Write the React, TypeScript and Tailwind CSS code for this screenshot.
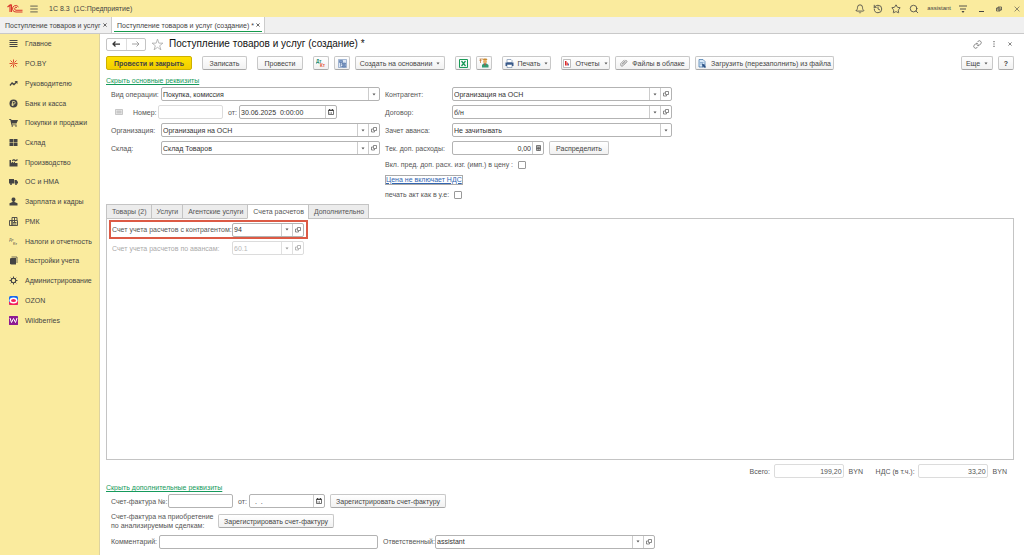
import type { ReactNode } from 'react'
import { Bell, History, Link, Menu, Search, Star } from 'lucide-react'

const icons: Record<string, ReactNode> = {
  main: <path d="M1 2h16v2H1zM1 6h16v2H1zM1 10h16v2H1zM1 14h16v2H1z" />,
  po: (
    <g stroke="#dd4a2c" strokeWidth="2" fill="none">
      <path d="M9 1v5M9 12v5M1 9h5M12 9h5M3 3l4 4M11 11l4 4M15 3l-4 4M3 15l4-4" />
      <circle cx="9" cy="9" r="1.5" />
    </g>
  ),
  chart: <path d="M1 12l5-6 4 3 3-3-2-2h6v6l-2-2-5 5-4-3-3 4z" />,
  bank: (
    <>
      <circle cx="9" cy="9" r="8" />
      <path d="M7 14V5h3a2.500 2.500 0 0 1 0 5H5M5 12h5" stroke="#faeb9e" strokeWidth="1.5" fill="none" />
    </>
  ),
  cart: (
    <>
      <path d="M0 2h4l1 2h13l-3 7H6l.5 2H15v1.500H5L2.500 3.500H0z" />
      <circle cx="6.5" cy="16" r="1.6" />
      <circle cx="14" cy="16" r="1.6" />
    </>
  ),
  stock: <path d="M1 2h7.500v6H1zM9.500 2H17v6H9.500zM1 9h7.500v7H1zM9.500 9H17v7H9.500z" />,
  factory: <path d="M1 17V4h3v6l4-3v3l4-3v3h5v7zM6 4l4-2 3 2 4-2v3l-4 2-3-2-4 1z" />,
  truck: (
    <>
      <path d="M0 4h10v9H0zM11 6h4l3 4v3h-7z" />
      <circle cx="4" cy="14" r="2" />
      <circle cx="14" cy="14" r="2" />
    </>
  ),
  person: <path d="M9 1a4 4 0 0 1 2 7.500v1.500l6 2.500V17H1v-4.500L7 10V8.500A4 4 0 0 1 9 1z" />,
  rmk: (
    <g fill="none" stroke="currentColor" strokeWidth="1.8">
      <path d="M6 6V1h10v5M1 7h5v10H1zM6 7h11v10H6zM8 11h7M8 14h7M11 1v9" />
    </g>
  ),
  tax: (
    <g fontFamily="Liberation Sans, sans-serif" fontSize="8">
      <text x="0" y="8">Дт</text>
      <text x="8" y="16">Кт</text>
    </g>
  ),
  books: (
    <>
      <path d="M2 5l3-1v13l-3-1zM5 4h9v13H5z" />
      <path d="M5 2h11v12" stroke="currentColor" strokeWidth="1.5" fill="none" />
    </>
  ),
  gear: (
    <g fill="none" stroke="currentColor">
      <circle cx="9" cy="9" r="4.5" strokeWidth="2.2" />
      <path d="M9 1v3M9 14v3M1 9h3M14 9h3M3.500 3.500l2 2M12.500 12.500l2 2M14.500 3.500l-2 2M5.500 12.500l-2 2" strokeWidth="2" />
    </g>
  ),
  ozon: (
    <>
      <rect width="18" height="18" rx="3" fill="#1668ee" />
      <path d="M0 12v3a3 3 0 0 0 3 3h12a3 3 0 0 0 3-3V9z" fill="#f3215c" />
      <ellipse cx="9" cy="9" rx="8" ry="6" fill="#fff" />
      <ellipse cx="9" cy="9" rx="5" ry="3" fill="#f3215c" />
    </>
  ),
  wb: (
    <>
      <rect width="18" height="18" rx="1" fill="#8e1a92" />
      <path d="M2 4l3 9 4-8 4 8 3-9" stroke="#fff" strokeWidth="2" fill="none" />
    </>
  ),
}

const sections = [
  { icon: 'main', title: 'Главное' },
  { icon: 'po', title: 'PO.BY' },
  { icon: 'chart', title: 'Руководителю' },
  { icon: 'bank', title: 'Банк и касса' },
  { icon: 'cart', title: 'Покупки и продажи' },
  { icon: 'stock', title: 'Склад' },
  { icon: 'factory', title: 'Производство' },
  { icon: 'truck', title: 'ОС и НМА' },
  { icon: 'person', title: 'Зарплата и кадры' },
  { icon: 'rmk', title: 'РМК' },
  { icon: 'tax', title: 'Налоги и отчетность' },
  { icon: 'books', title: 'Настройки учета' },
  { icon: 'gear', title: 'Администрирование' },
  { icon: 'ozon', title: 'OZON' },
  { icon: 'wb', title: 'Wildberries' },
]

const documentTabs = ['Товары (2)', 'Услуги', 'Агентские услуги', 'Счета расчетов', 'Дополнительно']

function Caret() {
  return (
    <svg viewBox="0 0 8 6" className="w-1 h-[3px] shrink-0" fill="#555" aria-hidden>
      <path d="M1 1h6L4 5z" />
    </svg>
  )
}

function Cross({ className = '' }: { className?: string }) {
  return (
    <svg viewBox="0 0 10 10" className={className} fill="none" stroke="currentColor" aria-hidden>
      <path d="M1 1l8 8M9 1L1 9" />
    </svg>
  )
}

function OpenIcon() {
  return (
    <svg viewBox="0 0 12 12" className="w-1.5 h-1.5" fill="none" stroke="#666" strokeWidth="1.5" aria-hidden>
      <path d="M5 1h6v6H5zM4 4H1v6h6V8" />
    </svg>
  )
}

function CalendarIcon() {
  return (
    <svg viewBox="0 0 12 12" className="w-1.5 h-1.5" fill="none" stroke="#444" aria-hidden>
      <path d="M1 2h10v9H1z" strokeWidth="1.5" />
      <path d="M1 3h10M3 0v3M9 0v3" strokeWidth="2" />
      <path d="M3 7h6M3 9h6" strokeDasharray="2 1" />
    </svg>
  )
}

function Btn({ children, className = '', label }: { children: ReactNode; className?: string; label?: string }) {
  return (
    <button
      aria-label={label}
      className={`h-[14px] shrink-0 flex items-center justify-center gap-1 rounded-[2px] border border-[#c8c8c8] border-b-[#a8a8a8] bg-linear-to-b from-white to-[#f1f1f1] text-[#444] whitespace-nowrap ${className}`}
    >
      {children}
    </button>
  )
}

type ComboProps = {
  id: string
  value: string
  className?: string
  open?: boolean
  disabled?: boolean
}

function Combo({ id, value, className = '', open = true, disabled = false }: ComboProps) {
  return (
    <div
      className={`h-[14px] flex rounded-[2px] border bg-white ${disabled ? 'border-[#dcdcdc] text-[#888] *:opacity-60' : 'border-[#b3b3b3] text-[#333]'} ${className}`}
    >
      <div className="grid flex-1 min-w-0">
        <select id={id} disabled={disabled} className="col-start-1 row-start-1 appearance-none w-full min-w-0 pl-px outline-none">
          <option>{value}</option>
        </select>
        <span className="col-start-1 row-start-1 justify-self-end w-[11px] border-l border-[#ccc] flex items-center justify-center pointer-events-none">
          <Caret />
        </span>
      </div>
      {open && (
        <button aria-label="Открыть" disabled={disabled} className="w-[11px] border-l border-[#ccc] flex items-center justify-center">
          <OpenIcon />
        </button>
      )}
    </div>
  )
}

function DateInput({ id, value, className = '' }: { id: string; value: string; className?: string }) {
  return (
    <div className={`h-[14px] flex rounded-[2px] border border-[#b3b3b3] bg-white text-[#333] ${className}`}>
      <input id={id} defaultValue={value} className="flex-1 min-w-0 pl-px outline-none" />
      <button aria-label="Выбрать дату" className="w-[11px] border-l border-[#ccc] flex items-center justify-center">
        <CalendarIcon />
      </button>
    </div>
  )
}

function TitleBar() {
  return (
    <header className="h-[17px] shrink-0 flex items-center bg-[#faeb9e] pl-[7px] pr-1 text-[#444]">
      <svg viewBox="0 0 32 18" className="w-4 h-[9px]" fill="none" stroke="#d9352b" aria-hidden>
        <path d="M1 6l5-4v14M9 16V2L6 3" strokeWidth="2.2" />
        <path d="M23 6a6.500 6.500 0 1 0-5 10h13M20 7a3 3 0 1 0-2 5.500h13" strokeWidth="2" />
      </svg>
      <button aria-label="Меню" className="ml-1.5">
        <Menu className="w-[10px] h-[10px]" strokeWidth={2} />
      </button>
      <span className="ml-[10px] whitespace-pre">1С 8.3  (1С:Предприятие)</span>
      <div className="ml-auto flex items-center gap-2">
        <button aria-label="Уведомления"><Bell className="w-[10px] h-[10px]" /></button>
        <button aria-label="История"><History className="w-[10px] h-[10px]" /></button>
        <button aria-label="Избранное"><Star className="w-[10px] h-[10px]" /></button>
        <button aria-label="Поиск"><Search className="w-[10px] h-[10px]" /></button>
        <span className="text-[6px]">assistant</span>
        <button aria-label="Настройки">
          <svg viewBox="0 0 16 16" className="w-2 h-2" stroke="currentColor" strokeWidth="1.8" fill="none" aria-hidden>
            <path d="M0 2h16M2 8h12" />
            <path d="M5 12h6l-3 4z" fill="currentColor" stroke="none" />
          </svg>
        </button>
        <div className="ml-1 flex items-center gap-3">
          <button aria-label="Свернуть" className="w-[5px] h-1.5 border-b border-[#444]" />
          <button aria-label="Восстановить">
            <svg viewBox="0 0 12 12" className="w-1.5 h-1.5" fill="none" stroke="currentColor" strokeWidth="1.5" aria-hidden>
              <path d="M4 2h7v6H4zM1 4h7v6H1z" />
            </svg>
          </button>
          <button aria-label="Закрыть"><Cross className="w-1.5 h-1.5" /></button>
        </div>
      </div>
    </header>
  )
}

function WindowTabs() {
  return (
    <div className="h-[17px] shrink-0 flex bg-[#f0f0f0] border-b border-[#c9c9c9] text-[#444]">
      <div className="w-[112px] flex items-center justify-between pl-[5px] pr-1 border-r border-[#ccc] whitespace-nowrap">
        <a href="#list">Поступление товаров и услуг</a>
        <button aria-label="Закрыть вкладку"><Cross className="w-1 h-1 stroke-2" /></button>
      </div>
      <div className="w-[153px] px-0.5 pb-px bg-white border-r border-[#ccc] flex whitespace-nowrap">
        <div className="flex-1 flex items-center justify-between pl-[3px] pr-0.5 pt-0.5 border-b border-[#159a4c]">
          <a href="#doc">Поступление товаров и услуг (создание) *</a>
          <button aria-label="Закрыть вкладку"><Cross className="w-1 h-1 stroke-2" /></button>
        </div>
      </div>
    </div>
  )
}

function Sidebar() {
  return (
    <nav className="w-[100px] shrink-0 bg-[#faeb9e] border-r border-[#ddd3a0] text-[#444]">
      <ul className="h-[296px] grid auto-rows-fr">
        {sections.map((s) => (
          <li key={s.title} className="flex">
            <a href="#section" className="flex-1 flex items-center gap-[7px] pl-[9px] whitespace-nowrap">
              <svg viewBox="0 0 18 18" className="w-[9px] h-[9px] shrink-0" fill="currentColor" aria-hidden>{icons[s.icon]}</svg>
              {s.title}
            </a>
          </li>
        ))}
      </ul>
    </nav>
  )
}

function Heading() {
  return (
    <div className="h-5 shrink-0 flex items-center">
      <div className="flex h-[13px] w-10 rounded-[2px] border border-[#c4c4c4] divide-x divide-[#ddd]">
        <button aria-label="Назад" className="flex-1 flex items-center justify-center">
          <svg viewBox="0 0 16 12" className="w-2 h-1.5" stroke="#333" strokeWidth="2.5" fill="none" aria-hidden>
            <path d="M7 1L2 6l5 5M2 6h14" />
          </svg>
        </button>
        <button aria-label="Вперед" className="flex-1 flex items-center justify-center">
          <svg viewBox="0 0 16 12" className="w-2 h-1.5" stroke="#999" strokeWidth="1.8" fill="none" aria-hidden>
            <path d="M9 1l5 5-5 5M14 6H0" />
          </svg>
        </button>
      </div>
      <button aria-label="В избранное" className="ml-[5px]">
        <svg viewBox="0 0 24 24" className="w-[13px] h-[13px]" fill="none" stroke="#aaa" strokeWidth="1.5" aria-hidden>
          <path d="M12 2l2.500 7.500H22l-6 4.800 2.300 7.500-6.300-4.600-6.300 4.600L8 14.300 2 9.500h7.500z" />
        </svg>
      </button>
      <h1 className="ml-[5px] text-[10px] leading-3 text-[#111] whitespace-nowrap">Поступление товаров и услуг (создание) *</h1>
      <div className="ml-auto flex items-center gap-2 text-[#666]">
        <button aria-label="Ссылка"><Link className="w-[9px] h-[9px]" /></button>
        <button aria-label="Еще" className="w-2 flex justify-center">
          <svg viewBox="0 0 2 10" className="w-0.5 h-1.5" fill="currentColor" aria-hidden>
            <path d="M0 0h2v2H0zM0 4h2v2H0zM0 8h2v2H0z" />
          </svg>
        </button>
        <button aria-label="Закрыть" className="w-2 flex justify-center"><Cross className="w-1 h-1 stroke-2" /></button>
      </div>
    </div>
  )
}

function Toolbar() {
  return (
    <div className="h-[18px] shrink-0 flex items-center gap-[10px]">
      <button className="h-[14px] w-[86px] shrink-0 rounded-[2px] border border-[#cdb000] bg-linear-to-b from-[#ffe100] to-[#f2ce00] font-bold text-[#444] whitespace-nowrap">
        Провести и закрыть
      </button>
      <Btn className="w-[45px]">Записать</Btn>
      <Btn className="w-[46px]">Провести</Btn>
      <div className="flex gap-[5px]">
        <Btn label="Дт/Кт" className="w-4">
          <svg viewBox="0 0 20 20" className="w-[10px] h-[10px]" fontFamily="Liberation Sans, sans-serif" fontSize="9" fontWeight="700" aria-hidden>
            <text x="0" y="9" fill="#188a6a">Дт</text>
            <text x="8" y="18" fill="#e0533a">Кт</text>
          </svg>
        </Btn>
        <Btn label="Структура подчиненности" className="w-4">
          <svg viewBox="0 0 18 18" className="w-[9px] h-[9px]" fill="#dce6f4" stroke="#5d7fb0" aria-hidden>
            <path d="M1 1h16v16H1z" />
            <path d="M3 3h6v4H3zM9 8h6v3H9zM9 13h6v3H9z" fill="#7f9cc8" stroke="#3b5f96" />
            <path d="M5 7v8h4M5 10h4" fill="none" stroke="#3b5f96" />
          </svg>
        </Btn>
        <Btn className="w-[90px]">Создать на основании<Caret /></Btn>
      </div>
      <div className="flex gap-[5px]">
        <Btn label="Excel" className="w-4">
          <svg viewBox="0 0 18 18" className="w-[9px] h-[9px]" fill="none" stroke="#1a9a58" strokeWidth="2" aria-hidden>
            <path d="M1 1h16v16H1z" />
            <path d="M5 4l8 10M13 4L5 14" strokeWidth="2.5" />
          </svg>
        </Btn>
        <Btn label="Контрагент" className="w-4">
          <svg viewBox="0 0 20 20" className="w-[10px] h-[10px]" aria-hidden>
            <path d="M1 2h8M1 5h4M3 2v8" stroke="#c27b3c" strokeWidth="1.5" />
            <circle cx="12" cy="7" r="4" fill="#e9b268" />
            <path d="M7 4h10l-2-3h-5z" fill="#c98b31" />
            <path d="M6 19v-5l3-3h6l4 3v5z" fill="#319b72" />
            <path d="M10 11h4l-2 5z" fill="#d6402e" />
          </svg>
        </Btn>
      </div>
      <Btn className="w-[49px]">
        <svg viewBox="0 0 18 18" className="w-[9px] h-[9px]" aria-hidden>
          <path d="M5 1h7l2 2v4H4V1z" fill="#fff" stroke="#45658f" />
          <path d="M1 7h16v7H1z" fill="#39598a" />
          <path d="M4 11h10v6H4z" fill="#fff" stroke="#45658f" />
        </svg>
        Печать<Caret />
      </Btn>
      <div className="flex gap-[5px]">
        <Btn className="w-[49px]">
          <svg viewBox="0 0 16 18" className="w-2 h-[9px]" aria-hidden>
            <path d="M1 1h14v16H1z" fill="#fff" stroke="#aaa" strokeWidth="1.5" />
            <path d="M4 4h3v9H4z" fill="#d92929" />
            <path d="M7 7h3v6H7z" fill="#e35b5b" />
            <path d="M10 9h2v4h-2z" fill="#4d6fb0" />
          </svg>
          Отчеты<Caret />
        </Btn>
        <Btn className="w-[75px]">
          <svg viewBox="0 0 18 18" className="w-2 h-2" fill="none" stroke="#777" strokeWidth="1.6" aria-hidden>
            <path d="M4 12l8-8a2 2 0 0 1 3 3l-8 8a3.500 3.500 0 0 1-5-5l8-8M6 13l7-7" />
          </svg>
          Файлы в облаке
        </Btn>
        <Btn className="w-[139px]">
          <svg viewBox="0 0 18 18" className="w-[9px] h-[9px]" aria-hidden>
            <path d="M2 1h8l4 4v11H2z" fill="#d7e8f7" stroke="#4779ac" strokeWidth="1.5" />
            <path d="M4 7h7M4 10h5" stroke="#4779ac" />
            <path d="M8 9l7 3-2 1 3 3-2 2-3-3-2 2z" fill="#274e83" />
          </svg>
          Загрузить (перезаполнить) из файла
        </Btn>
      </div>
      <div className="ml-auto flex gap-[5px]">
        <Btn className="w-8">Еще<Caret /></Btn>
        <Btn label="Справка" className="w-4 font-bold">?</Btn>
      </div>
    </div>
  )
}

function MainFields() {
  return (
    <div className="shrink-0 flex gap-[5px] pl-[5px]">
      <div className="w-[269px] shrink-0">
        <div className="h-[18px] flex items-center">
          <label htmlFor="operation" className="w-[50px]">Вид операции:</label>
          <Combo id="operation" value="Покупка, комиссия" open={false} className="flex-1" />
        </div>
        <div className="h-[18px] flex items-center">
          <svg viewBox="0 0 16 12" className="w-2 h-1.5 ml-1 mr-[10px]" fill="#eee" stroke="#999" aria-hidden>
            <path d="M1 1h14v10H1zM3 4h10M3 6h10M3 8h10" />
          </svg>
          <label htmlFor="number" className="w-[25px]">Номер:</label>
          <input id="number" className="w-[65px] h-[14px] rounded-[2px] border border-[#dcdcdc] outline-none" />
          <label htmlFor="date" className="ml-[5px] w-[11px]">от:</label>
          <DateInput id="date" value="30.06.2025  0:00:00" className="w-[98px]" />
        </div>
        <div className="h-[18px] flex items-center">
          <label htmlFor="company" className="w-[50px]">Организация:</label>
          <Combo id="company" value="Организация на ОСН" className="flex-1" />
        </div>
        <div className="h-[18px] flex items-center">
          <label htmlFor="warehouse" className="w-[50px]">Склад:</label>
          <Combo id="warehouse" value="Склад Товаров" className="flex-1" />
        </div>
      </div>
      <div className="w-[287px] shrink-0">
        <div className="h-[18px] flex items-center">
          <label htmlFor="partner" className="w-[67px]">Контрагент:</label>
          <Combo id="partner" value="Организация на ОСН" className="flex-1" />
        </div>
        <div className="h-[18px] flex items-center">
          <label htmlFor="contract" className="w-[67px]">Договор:</label>
          <Combo id="contract" value="б/н" className="flex-1" />
        </div>
        <div className="h-[18px] flex items-center">
          <label htmlFor="advance" className="w-[67px]">Зачет аванса:</label>
          <Combo id="advance" value="Не зачитывать" open={false} className="flex-1" />
        </div>
        <div className="h-[18px] flex items-center">
          <label htmlFor="expenses" className="w-[67px]">Тек. доп. расходы:</label>
          <div className="w-[92px] h-[14px] flex rounded-[2px] border border-[#b3b3b3] text-[#333]">
            <input id="expenses" defaultValue="0,00" className="flex-1 min-w-0 pr-px text-right outline-none" />
            <button aria-label="Калькулятор" className="w-[11px] border-l border-[#ccc] flex items-center justify-center">
              <svg viewBox="0 0 10 12" className="w-[5px] h-1.5" fill="#eee" stroke="#555" strokeWidth="1.5" aria-hidden>
                <path d="M1 1h8v10H1zM1 4h8M4 4v7M6 4v7M1 7h8" />
              </svg>
            </button>
          </div>
          <Btn className="ml-[5px] w-[60px]">Распределить</Btn>
        </div>
        <div className="h-[15px] flex items-center gap-[5px]">
          <label htmlFor="include">Вкл. пред. доп. расх. изг. (имп.) в цену :</label>
          <input id="include" type="checkbox" className="appearance-none w-2 h-2 rounded-[1px] border border-[#999]" />
        </div>
        <div className="h-[15px] flex items-center">
          <a href="#vat" className="border border-[#aaa] leading-2 text-[#3265b0] underline">Цена не включает НДС</a>
        </div>
        <div className="h-[15px] flex items-center gap-[5px]">
          <label htmlFor="act">печать акт как в у.е:</label>
          <input id="act" type="checkbox" className="appearance-none w-2 h-2 rounded-[1px] border border-[#999]" />
        </div>
      </div>
    </div>
  )
}

function DocumentTabs() {
  return (
    <section className="flex-1 flex flex-col mt-0.5">
      <div role="tablist" className="flex h-[15px] -mb-px">
        {documentTabs.map((tab) => {
          const active = tab === 'Счета расчетов'
          return (
            <button
              key={tab}
              role="tab"
              aria-selected={active}
              className={`relative pl-[5px] pr-1 border -mr-px whitespace-nowrap ${active ? 'border-[#c4c4c4] border-b-white bg-white' : 'border-[#c4c4c4] bg-[#ececec]'}`}
            >
              {tab}
            </button>
          )
        })}
      </div>
      <div role="tabpanel" className="flex-1 min-h-[60px] border border-[#c4c4c4] pt-px pl-0.5">
        <div className="w-[199px] h-[19px] flex items-center border-2 border-[#dc5a45] pl-px">
          <label htmlFor="account" className="w-[120px] whitespace-nowrap">Счет учета расчетов с контрагентом:</label>
          <Combo id="account" value="94" className="w-[72px]" />
        </div>
        <div className="h-[18px] flex items-center pl-[3px]">
          <label htmlFor="advance-account" className="w-[120px] whitespace-nowrap text-[#aaa]">Счет учета расчетов по авансам:</label>
          <Combo id="advance-account" value="60.1" disabled className="w-[72px]" />
        </div>
      </div>
    </section>
  )
}

function Totals() {
  return (
    <div className="h-[22px] shrink-0 flex items-center justify-end pr-[7px]">
      <label htmlFor="total" className="w-6">Всего:</label>
      <input id="total" readOnly defaultValue="199,20" className="w-[70px] h-[14px] px-px text-right rounded-[2px] border border-[#dcdcdc]" />
      <span className="ml-[5px] w-[27px]">BYN</span>
      <label htmlFor="vat" className="w-[42px]">НДС (в т.ч.):</label>
      <input id="vat" readOnly defaultValue="33,20" className="w-[70px] h-[14px] px-px text-right rounded-[2px] border border-[#dcdcdc]" />
      <span className="ml-[5px]">BYN</span>
    </div>
  )
}

function ExtraFields() {
  return (
    <div className="shrink-0 pl-[5px] pb-1">
      <div className="h-[18px] flex items-center">
        <label htmlFor="invoice" className="w-[57px]">Счет-фактура №:</label>
        <input id="invoice" className="w-[65px] h-[14px] rounded-[2px] border border-[#b3b3b3] outline-none" />
        <label htmlFor="invoice-date" className="ml-[5px] w-[11px]">от:</label>
        <DateInput id="invoice-date" value="  .  ." className="w-[76px]" />
        <Btn className="ml-[5px] w-[116px]">Зарегистрировать счет-фактуру</Btn>
      </div>
      <div className="h-[22px] flex items-center">
        <span className="w-[107px] leading-[9px]">Счет-фактура на приобретение<br />по анализируемым сделкам:</span>
        <Btn className="w-[116px]">Зарегистрировать счет-фактуру</Btn>
      </div>
      <div className="h-[19px] flex items-center">
        <label htmlFor="comment" className="w-12">Комментарий:</label>
        <input id="comment" className="w-[219px] h-[14px] rounded-[2px] border border-[#b3b3b3] outline-none" />
        <label htmlFor="responsible" className="ml-[5px] w-[52px]">Ответственный:</label>
        <Combo id="responsible" value="assistant" className="w-[220px]" />
      </div>
    </div>
  )
}

export default function App() {
  return (
    <div className="min-h-screen flex flex-col bg-white font-['Liberation_Sans',Arial,sans-serif] text-[7px] leading-[9px] text-[#555]">
      <TitleBar />
      <WindowTabs />
      <div className="flex-1 flex">
        <Sidebar />
        <main className="flex-1 min-w-0 flex flex-col pl-1.5 pr-[10px]">
          <Heading />
          <Toolbar />
          <a href="#main-fields" className="self-start mt-1 text-[#159a5c] underline">Скрыть основные реквизиты</a>
          <MainFields />
          <DocumentTabs />
          <Totals />
          <a href="#extra-fields" className="self-start mt-px text-[#159a5c] underline">Скрыть дополнительные реквизиты</a>
          <ExtraFields />
        </main>
      </div>
    </div>
  )
}
